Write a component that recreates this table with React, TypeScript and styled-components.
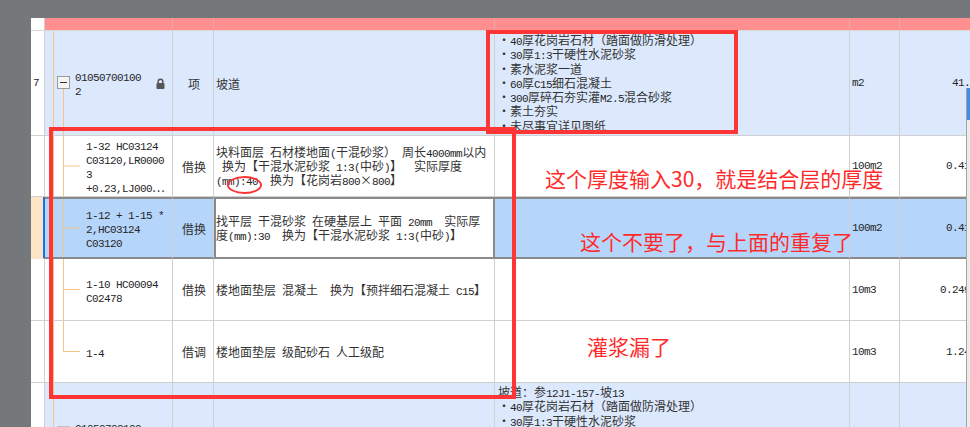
import React from "react";
import styled, { createGlobalStyle, css } from "styled-components";

const GlobalStyle = createGlobalStyle`
  html, body { margin: 0; padding: 0; background: #75787b; }
  body { font-family: "Noto Sans CJK SC", sans-serif; }
`;

const COLS = "14px 128px 41px 281px 355px 50px 90px";
const RED = "#fd3535";
const GRID = "#d0d0d0";
const SEL_LINE = "#8a8a8a";
const TREE = "#f7c488";

const Screen = styled.div`
  position: relative;
  width: 970px;
  height: 427px;
  overflow: hidden;
  background: #75787b;
  display: flex;
  flex-direction: column;
`;

const TopBar = styled.div`
  height: 18px;
  flex: none;
  background: #75787b;
`;

const Body = styled.div`
  flex: 1;
  display: flex;
  min-height: 0;
`;

const SideStrip = styled.div`
  width: 31px;
  flex: none;
  background: #75787b;
`;

const Sheet = styled.div`
  flex: 1;
  overflow: hidden;
  background: #fff;
  display: flex;
  flex-direction: column;
`;

const Row = styled.div<{ $h: number; $bg: string }>`
  display: grid;
  grid-template-columns: ${COLS};
  width: 959px;
  height: ${(p) => p.$h}px;
  flex: none;
  background: ${(p) => p.$bg};
`;

const Cell = styled.div<{ $sel?: boolean; $align?: "start" | "center" | "end"; $top?: boolean }>`
  box-sizing: border-box;
  overflow: hidden;
  display: flex;
  align-items: ${(p) => (p.$top ? "flex-start" : "center")};
  justify-content: ${(p) =>
    p.$align === "center" ? "center" : p.$align === "end" ? "flex-end" : "flex-start"};
  border-right: 1px solid ${GRID};
  border-bottom: 1px solid ${GRID};
  padding-left: 2px;
  font-size: 12px;
  color: #333;
  ${(p) =>
    p.$sel &&
    css`
      border-top: 2px solid ${SEL_LINE};
      border-bottom: 2px solid ${SEL_LINE};
    `}
`;

const HeadCell = styled.div<{ $first?: boolean }>`
  box-sizing: border-box;
  background: ${(p) => (p.$first ? "#fff" : "#ff8e8e")};
  border-right: 1px solid ${(p) => (p.$first ? GRID : "#eba7a7")};
  border-bottom: 1px solid #d8d8d8;
`;

const NumCell = styled(Cell)<{ $selRow?: boolean }>`
  background: ${(p) => (p.$selRow ? "#fde4c6" : "#fff")};
  border-right: ${(p) => (p.$selRow ? "2px solid #1d6de3" : `1px solid ${GRID}`)};
  border-bottom: 1px solid ${(p) => (p.$selRow ? "#fde4c6" : GRID)};
  padding-left: 2px;
`;

const CodeCell = styled(Cell)`
  padding-left: 0;
  align-items: stretch;
`;

const ActiveCell = styled(Cell)`
  background: #fff;
  border: 2px solid ${SEL_LINE};
  padding-left: 0;
`;

const FeatureCell = styled(Cell)`
  padding-left: 3px;
  padding-top: 2px;
`;

const QtyCell = styled(Cell)`
  padding-right: 7px;
`;

const TreeSvg = styled.svg`
  flex: none;
  height: 100%;
  display: block;
`;

const CodeText = styled.div`
  display: flex;
  flex-direction: column;
  justify-content: center;
  flex: 1;
`;

const Lines = styled.div`
  display: flex;
  flex-direction: column;
`;

const Line = styled.div<{ $lh?: number }>`
  white-space: pre;
  line-height: ${(p) => p.$lh ?? 14}px;
  height: ${(p) => p.$lh ?? 14}px;
`;

const Mono = styled.span`
  font-family: "Liberation Mono", monospace;
  font-size: 11px;
  letter-spacing: -0.6px;
  color: #262626;
`;

const LockWrap = styled.div`
  flex: none;
  display: flex;
  align-items: center;
  margin-right: 7px;
`;

const Frame = styled.div<{ $x: number; $y: number; $w: number; $h: number }>`
  position: absolute;
  left: ${(p) => p.$x}px;
  top: ${(p) => p.$y}px;
  width: ${(p) => p.$w}px;
  height: ${(p) => p.$h}px;
  box-sizing: border-box;
  border: 4px solid ${RED};
  pointer-events: none;
`;

const Ring = styled.div`
  position: absolute;
  left: 227px;
  top: 176px;
  width: 35px;
  height: 18px;
  box-sizing: border-box;
  border: 2px solid ${RED};
  border-radius: 50%;
`;

const Note = styled.div<{ $x: number; $y: number }>`
  position: absolute;
  left: ${(p) => p.$x}px;
  top: ${(p) => p.$y}px;
  font-family: "Noto Sans CJK SC", sans-serif;
  font-size: 21px;
  line-height: 21px;
  color: #ff2b2b;
  white-space: nowrap;
`;

const ScrollBar = styled.div`
  position: absolute;
  left: 966px;
  top: 88px;
  width: 4px;
  bottom: 0;
  box-sizing: border-box;
  border-left: 1px solid #a4a4a4;
  background: #ececec;
  &::before {
    content: "";
    display: block;
    height: 32px;
    background: #3b8de9;
  }
`;

function Mixed({ text }: { text: string }) {
  const parts = text.split(/([\x20-\x7e]+)/);
  return (
    <>
      {parts.map((p, i) =>
        p === "" ? null : /^[\x20-\x7e]+$/.test(p) ? (
          <Mono key={i}>{p}</Mono>
        ) : (
          <React.Fragment key={i}>{p}</React.Fragment>
        )
      )}
    </>
  );
}

function TextLines({ lines, lh }: { lines: string[]; lh?: number }) {
  return (
    <Lines>
      {lines.map((l, i) => (
        <Line key={i} $lh={lh}>
          <Mixed text={l} />
        </Line>
      ))}
    </Lines>
  );
}

type TreeKind = "parent" | "child" | "last";

function Tree({ kind }: { kind: TreeKind }) {
  const w = kind === "parent" ? 30 : 41;
  return (
    <TreeSvg width={w}>
      <line x1="8.5" y1="0" x2="8.5" y2="100%" stroke={TREE} strokeWidth="1" />
      {kind === "parent" ? (
        <>
          <line x1="18.5" y1="50%" x2="18.5" y2="100%" stroke={TREE} strokeWidth="1" />
          <svg x="12" y="50%" overflow="visible">
            <rect x="0.5" y="-6.5" width="12" height="12" fill="#f4f4f4" stroke="#9a9a9a" />
            <line x1="3" y1="-0.5" x2="10" y2="-0.5" stroke="#333" strokeWidth="1" />
          </svg>
        </>
      ) : (
        <>
          <line
            x1="18.5"
            y1="0"
            x2="18.5"
            y2={kind === "last" ? "50%" : "100%"}
            stroke={TREE}
            strokeWidth="1"
          />
          <line x1="18.5" y1="50%" x2="35" y2="50%" stroke={TREE} strokeWidth="1" />
        </>
      )}
    </TreeSvg>
  );
}

function Lock() {
  return (
    <svg width="9" height="11" viewBox="0 0 9 11">
      <path d="M2.2 5.2V3.6a2.3 2.3 0 0 1 4.6 0v1.6" stroke="#555" strokeWidth="1.5" fill="none" />
      <rect x="0.5" y="5" width="8" height="6" rx="1" fill="#555" />
    </svg>
  );
}

const FEATURES = [
  "・40厚花岗岩石材（踏面做防滑处理）",
  "・30厚1:3干硬性水泥砂浆",
  "・素水泥浆一道",
  "・60厚C15细石混凝土",
  "・300厚碎石夯实灌M2.5混合砂浆",
  "・素土夯实",
  "・未尽事宜详见图纸",
];

type Child = {
  h: number;
  code: string[];
  kind: "借换" | "借调";
  name: string[];
  unit: string;
  qty: string;
  tree: TreeKind;
  sel?: boolean;
};

const CHILDREN: Child[] = [
  {
    h: 61,
    code: ["1-32 HC03124", "C03120,LR0000", "3", "+0.23,LJ000…"],
    kind: "借换",
    name: [
      "块料面层 石材楼地面(干混砂浆） 周长4000mm以内",
      " 换为【干混水泥砂浆 1:3(中砂)】  实际厚度",
      "(mm):40  换为【花岗岩800×800】",
    ],
    unit: "100m2",
    qty: "0.4196",
    tree: "child",
  },
  {
    h: 62,
    code: ["1-12 + 1-15 *", "2,HC03124", "C03120"],
    kind: "借换",
    name: ["找平层 干混砂浆 在硬基层上 平面 20mm  实际厚", "度(mm):30  换为【干混水泥砂浆 1:3(中砂)】"],
    unit: "100m2",
    qty: "0.4196",
    tree: "child",
    sel: true,
  },
  {
    h: 62,
    code: ["1-10 HC00094", "C02478"],
    kind: "借换",
    name: ["楼地面垫层 混凝土  换为【预拌细石混凝土 C15】"],
    unit: "10m3",
    qty: "0.24980",
    tree: "child",
  },
  {
    h: 62,
    code: ["1-4"],
    kind: "借调",
    name: ["楼地面垫层 级配砂石 人工级配"],
    unit: "10m3",
    qty: "1.2490",
    tree: "last",
  },
];

function BillRow({ h, num, features }: { h: number; num?: string; features: string[] }) {
  return (
    <Row $h={h} $bg="#dce9fd">
      <NumCell>
        <Mono>{num ?? ""}</Mono>
      </NumCell>
      <CodeCell>
        <Tree kind="parent" />
        <CodeText>
          <TextLines lines={["01050700100", "2"]} />
        </CodeText>
        <LockWrap>
          <Lock />
        </LockWrap>
      </CodeCell>
      <Cell $align="center">项</Cell>
      <Cell>坡道</Cell>
      <FeatureCell $top>
        <TextLines lines={features} lh={14.3} />
      </FeatureCell>
      <Cell>
        <Mono>m2</Mono>
      </Cell>
      <QtyCell $align="end">
        <Mono>41.96</Mono>
      </QtyCell>
    </Row>
  );
}

function ChildRow({ c }: { c: Child }) {
  const sel = !!c.sel;
  const NameCell = sel ? ActiveCell : Cell;
  return (
    <Row $h={c.h} $bg={sel ? "#b6d5fb" : "#fff"}>
      <NumCell $selRow={sel} />
      <CodeCell $sel={sel}>
        <Tree kind={c.tree} />
        <CodeText>
          <TextLines lines={c.code} />
        </CodeText>
      </CodeCell>
      <Cell $sel={sel} $align="center">
        {c.kind}
      </Cell>
      <NameCell $sel={sel}>
        <TextLines lines={c.name} />
      </NameCell>
      <Cell $sel={sel} />
      <Cell $sel={sel}>
        <Mono>{c.unit}</Mono>
      </Cell>
      <QtyCell $sel={sel} $align="end">
        <Mono>{c.qty}</Mono>
      </QtyCell>
    </Row>
  );
}

export default function App() {
  return (
    <>
      <GlobalStyle />
      <Screen>
        <TopBar />
        <Body>
          <SideStrip />
          <Sheet>
            <Row $h={13} $bg="#ff8e8e">
              <HeadCell $first />
              <HeadCell />
              <HeadCell />
              <HeadCell />
              <HeadCell />
              <HeadCell />
              <HeadCell />
            </Row>
            <BillRow h={105} num="7" features={FEATURES} />
            {CHILDREN.map((c, i) => (
              <ChildRow key={i} c={c} />
            ))}
            <BillRow h={102} features={["坡道：参12J1-157-坡13", ...FEATURES]} />
          </Sheet>
        </Body>
        <ScrollBar />
        <Frame $x={486} $y={30} $w={252} $h={104} />
        <Frame $x={49} $y={127} $w={467} $h={272} />
        <Ring />
        <Note $x={545} $y={168}>这个厚度输入30，就是结合层的厚度</Note>
        <Note $x={580} $y={231}>这个不要了，与上面的重复了</Note>
        <Note $x={587} $y={336}>灌浆漏了</Note>
      </Screen>
    </>
  );
}
